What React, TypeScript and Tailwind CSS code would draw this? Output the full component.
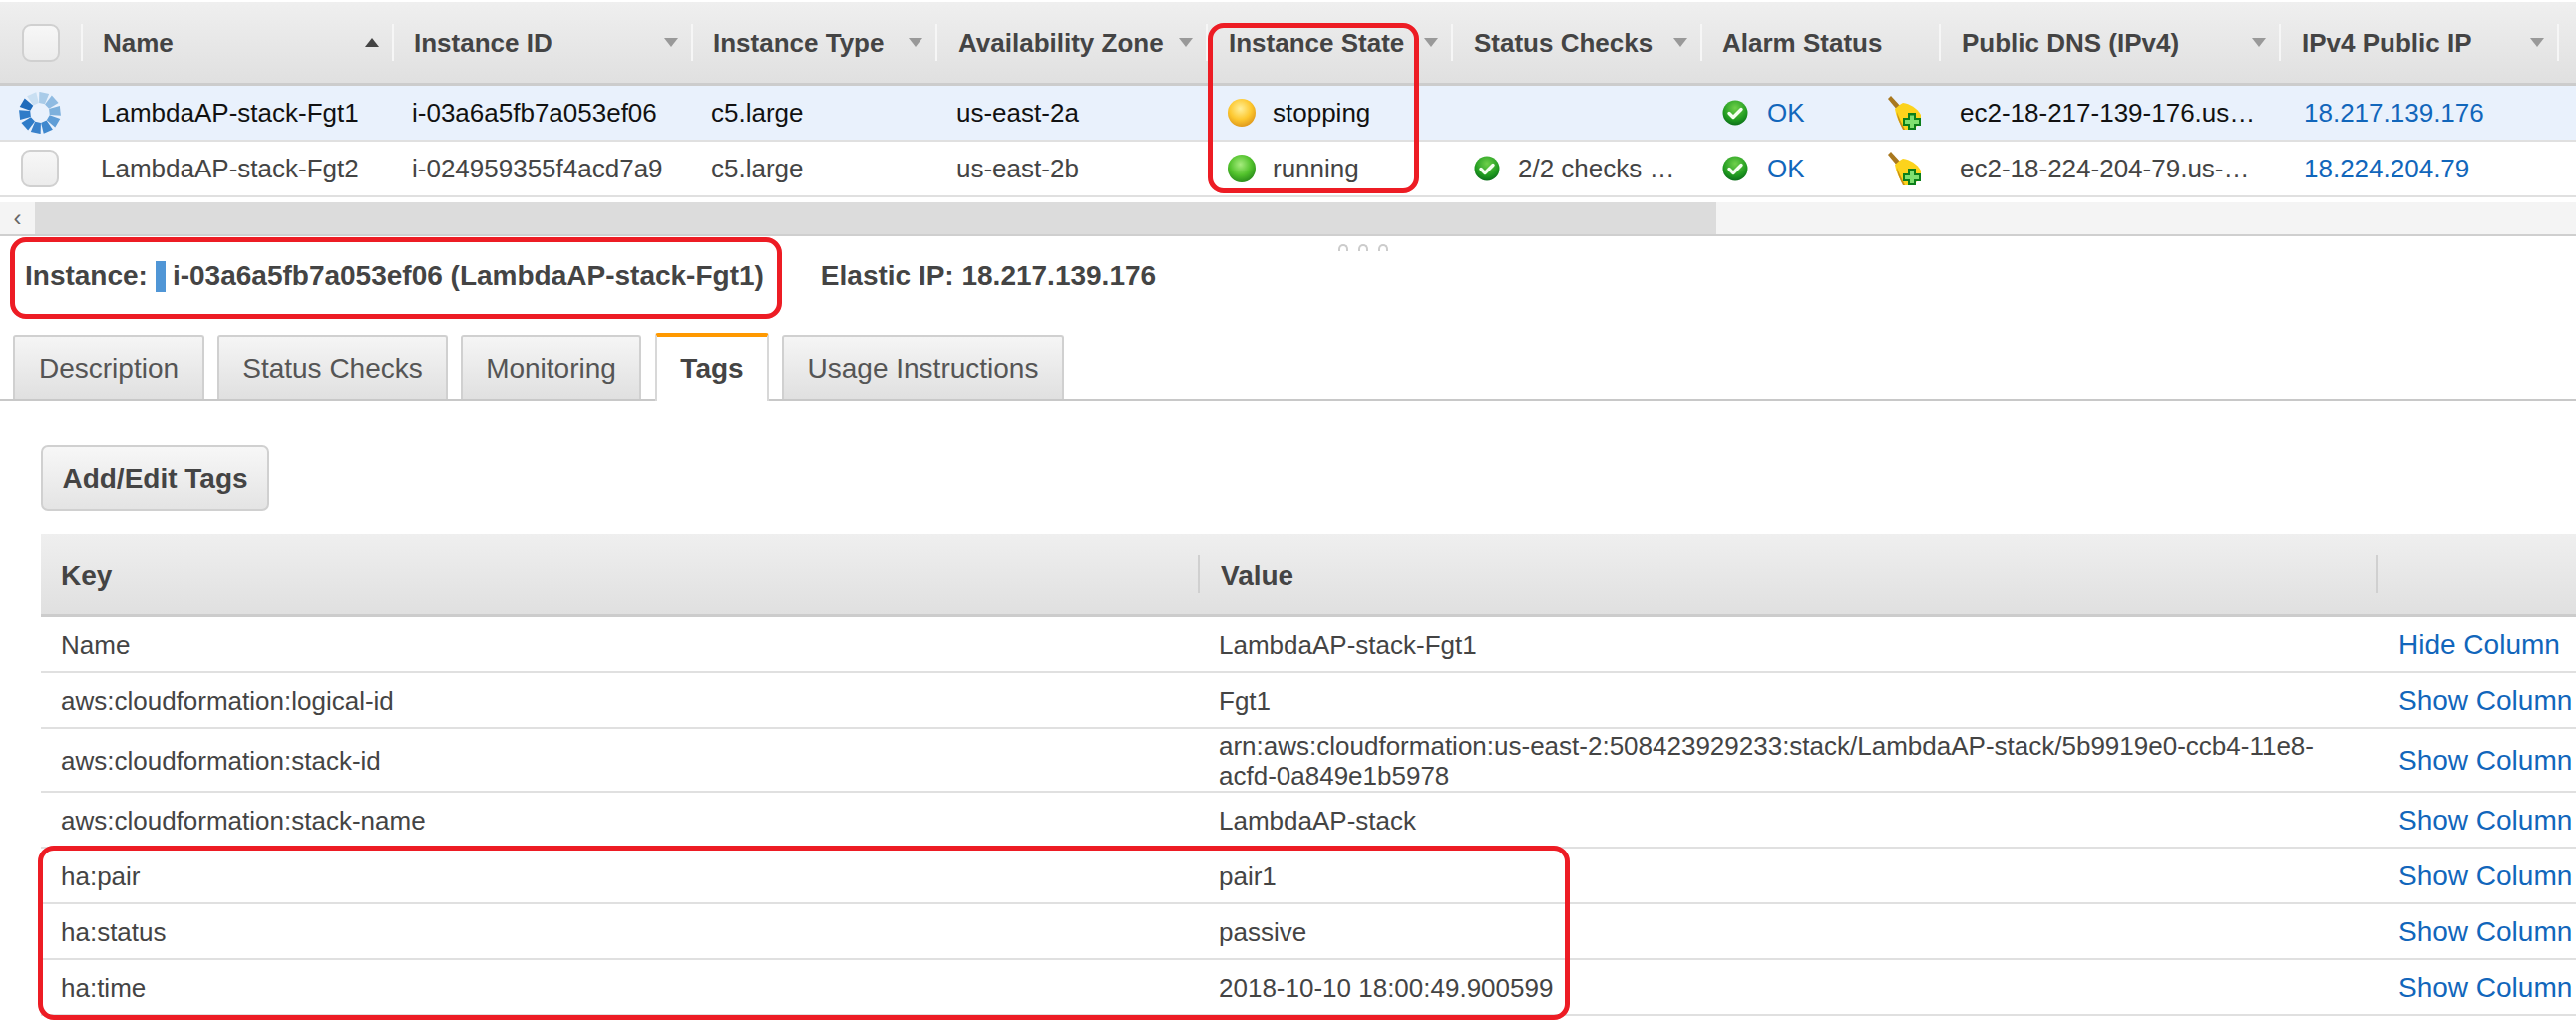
const FONT = "font-['Liberation_Sans',Arial,sans-serif]"

const columns = [
  { label: 'Name', width: 'w-[312px]', pad: 'pl-[20px]', sort: 'up' },
  { label: 'Instance ID', width: 'w-[300px]', pad: 'pl-[20px]', sort: 'down' },
  { label: 'Instance Type', width: 'w-[245px]', pad: 'pl-[20px]', sort: 'down' },
  { label: 'Availability Zone', width: 'w-[271px]', pad: 'pl-[21px]', sort: 'down' },
  { label: 'Instance State', width: 'w-[246px]', pad: 'pl-[21px]', sort: 'down' },
  { label: 'Status Checks', width: 'w-[250px]', pad: 'pl-[21px]', sort: 'down' },
  { label: 'Alarm Status', width: 'w-[239px]', pad: 'pl-[20px]', sort: '' },
  { label: 'Public DNS (IPv4)', width: 'w-[341px]', pad: 'pl-[21px]', sort: 'down' },
  { label: 'IPv4 Public IP', width: 'w-[279px]', pad: 'pl-[21px]', sort: 'down' },
]

const tags = [
  { key: 'Name', value: 'LambdaAP-stack-Fgt1', link: 'Hide Column' },
  { key: 'aws:cloudformation:logical-id', value: 'Fgt1', link: 'Show Column' },
  { key: 'aws:cloudformation:stack-id', value: 'arn:aws:cloudformation:us-east-2:508423929233:stack/LambdaAP-stack/5b9919e0-ccb4-11e8-acfd-0a849e1b5978', link: 'Show Column', tall: true },
  { key: 'aws:cloudformation:stack-name', value: 'LambdaAP-stack', link: 'Show Column' },
  { key: 'ha:pair', value: 'pair1', link: 'Show Column' },
  { key: 'ha:status', value: 'passive', link: 'Show Column' },
  { key: 'ha:time', value: '2018-10-10 18:00:49.900599', link: 'Show Column' },
]

function Ball({ color }: { color: 'yellow' | 'green' }) {
  const stops = color === 'yellow' ? ['#fff09a', '#fdc82f', '#e09a1c'] : ['#a6ec7e', '#52c22c', '#2c8f1c']
  return (
    <svg width="30" height="30" viewBox="0 0 30 30">
      <defs>
        <radialGradient id={`ball-${color}`} cx="45%" cy="35%" r="65%">
          <stop offset="0%" stopColor={stops[0]} />
          <stop offset="60%" stopColor={stops[1]} />
          <stop offset="100%" stopColor={stops[2]} />
        </radialGradient>
      </defs>
      <circle cx="15" cy="15" r="14" fill={`url(#ball-${color})`} />
    </svg>
  )
}

function CheckIcon() {
  return (
    <svg width="28" height="28" viewBox="0 0 28 28">
      <defs>
        <radialGradient id="check-green" cx="50%" cy="30%" r="70%">
          <stop offset="0%" stopColor="#6fd04a" />
          <stop offset="70%" stopColor="#1f9a1f" />
          <stop offset="100%" stopColor="#0d6f1a" />
        </radialGradient>
      </defs>
      <circle cx="14" cy="14" r="12.5" fill="url(#check-green)" />
      <path d="M8 14.5l4 4 8-8" fill="none" stroke="#f4fff0" strokeWidth="3.4" strokeLinecap="round" strokeLinejoin="round" />
    </svg>
  )
}

function KeyIcon() {
  return (
    <svg width="34" height="34" viewBox="0 0 34 34">
      <path d="M1 3l3-3 11 12-4 3z" fill="#a9781e" />
      <path d="M8 13c3-3 6-5 8-6 7 1 14 5 18 12v8l-9 7h-8C12 27 9 20 8 13z" fill="#fcd31c" />
      <path d="M10 16c2 6 5 12 8 18h-2C13 28 10 22 10 16z" fill="#c98f16" />
      <path d="M21 17h8v5h5v8h-5v4h-8v-4h-5v-8h5z" fill="#0c7f1a" />
      <path d="M23 19.500h4v4.500h5v4h-5v4h-4v-4h-5v-4h5z" fill="#7fe070" />
    </svg>
  )
}

function Spinner() {
  const tiles = ['#a9cbe8', '#8fbbe2', '#7db0dc', '#5f9dd6', '#3f88ce', '#3a82cb', '#2f7cc8', '#2f7cc8', '#1f6bbb', '#c9dff2']
  return (
    <svg width="42" height="42" viewBox="0 0 42 42">
      {tiles.map((c, i) => (
        <path key={i} d="M16 0.500h10l-2 11h-6z" fill={c} transform={`rotate(${i * 36 + 12} 21 21)`} />
      ))}
    </svg>
  )
}

function Checkbox() {
  return <div className="h-[38px] w-[38px] rounded-[9px] border-2 border-[#d0d0d0] bg-gradient-to-b from-[#f7f7f7] to-[#ececec]" />
}

function Arrow({ dir }: { dir: string }) {
  if (dir === 'up') return <div className="h-0 w-0 border-x-[7px] border-b-[9px] border-x-transparent border-b-[#444]" />
  return <div className="h-0 w-0 border-x-[7px] border-t-[9px] border-x-transparent border-t-[#999]" />
}

function Row({ selected, name, id, zone, state, checks, dns, ip }: { selected: boolean; name: string; id: string; zone: string; state: 'yellow' | 'green'; checks: string; dns: string; ip: string }) {
  const ink = selected ? 'text-[#111] bg-[#e9f1fc]' : 'text-[#444] bg-white'
  return (
    <div className={`flex h-[56px] items-center border-b-2 border-[#e0e0e0] text-[26px] whitespace-nowrap ${ink}`}>
      <div className="flex w-[81px] justify-center pr-[1px]">{selected ? <Spinner /> : <Checkbox />}</div>
      <div className="w-[312px] pl-[20px]">{name}</div>
      <div className="w-[300px] pl-[20px]">{id}</div>
      <div className="w-[245px] pl-[20px]">c5.large</div>
      <div className="w-[271px] pl-[21px]">{zone}</div>
      <div className="flex w-[246px] items-center gap-[16px] pl-[21px]">
        <Ball color={state} />
        {state === 'yellow' ? 'stopping' : 'running'}
      </div>
      <div className="flex w-[250px] items-center gap-[17px] pl-[22px]">
        {checks && <CheckIcon />}
        {checks}
      </div>
      <div className="flex w-[239px] items-center pl-[21px]">
        <CheckIcon />
        <span className="ml-[18px] text-[#1166bb]">OK</span>
        <span className="ml-[82px]"><KeyIcon /></span>
      </div>
      <div className="w-[341px] pl-[21px]">{dns}</div>
      <div className="w-[279px] pl-[25px] text-[#1166bb]">{ip}</div>
    </div>
  )
}

export default function App() {
  return (
    <div className={`relative h-[1026px] w-[2583px] overflow-hidden bg-white ${FONT}`}>
      {/* instances grid */}
      <div className="pt-[2px]">
        <div className="flex h-[84px] items-start border-b-[3px] border-[#cccccc] bg-gradient-to-b from-[#efefef] to-[#e0e0e0] text-[26px] font-bold whitespace-nowrap text-[#444]">
          <div className="flex h-[81px] w-[81px] items-start justify-center pt-[22px]"><Checkbox /></div>
          {columns.map(col => (
            <div key={col.label} className={`flex ${col.width} mt-[22px] h-[37px] items-center border-l-2 border-[#f6f6f6] ${col.pad} pr-[13px]`}>
              <span className="flex-1 pt-[2px]">{col.label}</span>
              {col.sort && <Arrow dir={col.sort} />}
            </div>
          ))}
          <div className="mt-[22px] h-[37px] w-[19px] border-l-2 border-[#f6f6f6]" />
        </div>
        <Row selected name="LambdaAP-stack-Fgt1" id="i-03a6a5fb7a053ef06" zone="us-east-2a" state="yellow" checks="" dns="ec2-18-217-139-176.us…" ip="18.217.139.176" />
        <Row selected={false} name="LambdaAP-stack-Fgt2" id="i-024959355f4acd7a9" zone="us-east-2b" state="green" checks="2/2 checks …" dns="ec2-18-224-204-79.us-…" ip="18.224.204.79" />
      </div>

      {/* scrollbar */}
      <div className="mt-[5px] flex h-[34px] border-b-2 border-[#cfcfcf] bg-[#f4f4f4]">
        <div className="flex w-[35px] items-center justify-center text-[24px] leading-none text-[#666]">‹</div>
        <div className="w-[1686px] bg-[#dcdcdc]" />
      </div>

      {/* splitter */}
      <div className="flex h-[10px] justify-center gap-[10px] pt-[8px] pl-[151px]">
        <div className="h-[7px] w-[10px] rounded-t-full border-2 border-b-0 border-[#cccccc]" />
        <div className="h-[7px] w-[10px] rounded-t-full border-2 border-b-0 border-[#cccccc]" />
        <div className="h-[7px] w-[10px] rounded-t-full border-2 border-b-0 border-[#cccccc]" />
      </div>

      {/* instance title */}
      <div className="flex h-[60px] items-center pl-[25px] text-[28px] font-bold whitespace-nowrap text-[#444]">
        <span>Instance:</span>
        <span className="mr-[7px] ml-[8px] h-[31px] w-[10px] bg-[#5096d6]" />
        <span>i-03a6a5fb7a053ef06 (LambdaAP-stack-Fgt1)</span>
        <span className="ml-[57px]">Elastic IP: 18.217.139.176</span>
      </div>

      {/* tabs */}
      <div className="mt-[27px] flex h-[68px] items-end gap-[13px] border-b-2 border-[#c8c8c8] pl-[13px] text-[28px] text-[#555]">
        <div className="flex h-[64px] w-[192px] items-center justify-center rounded-t-[3px] border-x-2 border-t-2 border-[#d0d0d0] bg-gradient-to-b from-[#f5f5f5] to-[#e0e0e0] pt-[2px]">Description</div>
        <div className="flex h-[64px] w-[231px] items-center justify-center rounded-t-[3px] border-x-2 border-t-2 border-[#d0d0d0] bg-gradient-to-b from-[#f5f5f5] to-[#e0e0e0] pt-[2px]">Status Checks</div>
        <div className="flex h-[64px] w-[181px] items-center justify-center rounded-t-[3px] border-x-2 border-t-2 border-[#d0d0d0] bg-gradient-to-b from-[#f5f5f5] to-[#e0e0e0] pt-[2px]">Monitoring</div>
        <div className="-mb-[2px] ml-[1px] flex h-[68px] w-[114px] items-center justify-center rounded-t-[3px] border-x-2 border-t-4 border-x-[#d8d8d8] border-t-[#ff9900] bg-white font-bold text-[#444]">Tags</div>
        <div className="flex h-[64px] w-[283px] items-center justify-center rounded-t-[3px] border-x-2 border-t-2 border-[#d0d0d0] bg-gradient-to-b from-[#f5f5f5] to-[#e0e0e0] pt-[2px]">Usage Instructions</div>
      </div>

      {/* tags panel */}
      <div className="pl-[41px]">
        <div className="mt-[44px] flex h-[66px] w-[229px] items-center justify-center rounded-[7px] border-2 border-[#d0d0d0] bg-gradient-to-b from-[#f7f7f7] to-[#e4e4e4] pt-[2px] text-[28px] font-bold text-[#444]">Add/Edit Tags</div>

        <div className="mt-[24px] flex h-[83px] items-center border-b-[3px] border-[#cccccc] bg-gradient-to-b from-[#efefef] to-[#e0e0e0] text-[28px] font-bold text-[#444]">
          <div className="w-[1160px] pt-[3px] pl-[20px]">Key</div>
          <div className="h-[38px] w-[1181px] border-l-2 border-[#d0d0d0] pt-[2px] pl-[21px] leading-[38px]">Value</div>
          <div className="h-[38px] border-l-2 border-[#d0d0d0] pl-[21px]" />
        </div>

        {tags.map(tag => (
          <div key={tag.key} className={`flex ${tag.tall ? 'h-[64px]' : 'h-[56px]'} items-center border-b-2 border-[#e0e0e0] pt-[2px] text-[26px] text-[#444]`}>
            <div className="w-[1161px] pl-[20px]">{tag.key}</div>
            <div className="w-[1203px] pl-[20px] pr-[50px] leading-[30px] break-words">{tag.value}</div>
            <div className="whitespace-nowrap text-[28px] text-[#1166bb]">{tag.link}</div>
          </div>
        ))}
      </div>

      {/* red annotations */}
      <div className="absolute top-[23px] left-[1211px] h-[171px] w-[212px] rounded-[16px] border-[5px] border-[#ed1c24]" />
      <div className="absolute top-[238px] left-[10px] h-[82px] w-[774px] rounded-[16px] border-[5px] border-[#ed1c24]" />
      <div className="absolute top-[848px] left-[38px] h-[175px] w-[1536px] rounded-[16px] border-[5px] border-[#ed1c24]" />
    </div>
  )
}
